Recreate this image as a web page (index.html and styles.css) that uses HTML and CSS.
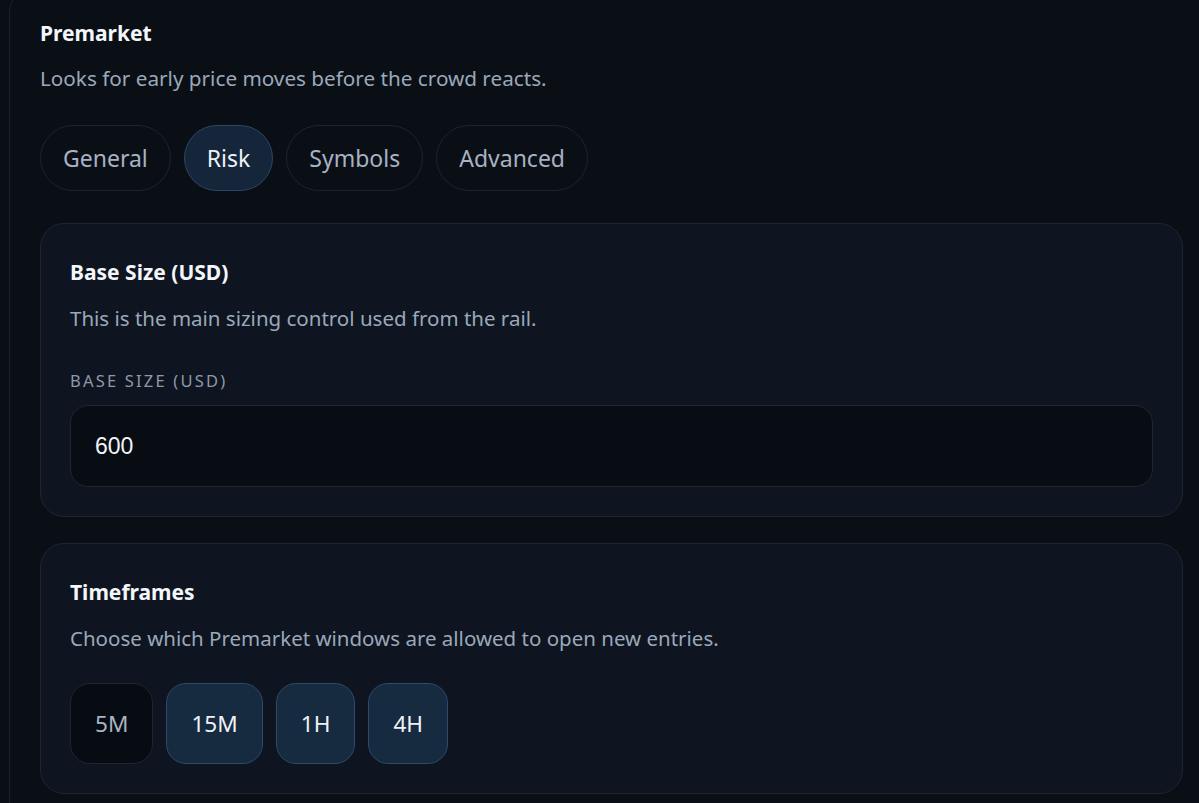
FILE: index.html
```html
<!DOCTYPE html>
<html lang="en">
<head>
<meta charset="utf-8">
<title>Premarket</title>
<link rel="stylesheet" href="styles.css">
</head>
<body>
<div class="panel">
  <h1 class="panel-title">Premarket</h1>
  <p class="panel-desc">Looks for early price moves before the crowd reacts.</p>
  <div class="tabs">
    <button class="tab">General</button>
    <button class="tab active">Risk</button>
    <button class="tab">Symbols</button>
    <button class="tab">Advanced</button>
  </div>
  <section class="card">
    <h2 class="card-title">Base Size (USD)</h2>
    <p class="card-desc">This is the main sizing control used from the rail.</p>
    <label class="field-label">BASE SIZE (USD)</label>
    <div class="input">600</div>
  </section>
  <section class="card">
    <h2 class="card-title">Timeframes</h2>
    <p class="card-desc">Choose which Premarket windows are allowed to open new entries.</p>
    <div class="chips">
      <button class="chip">5M</button>
      <button class="chip on">15M</button>
      <button class="chip on">1H</button>
      <button class="chip on">4H</button>
    </div>
  </section>
</div>
</body>
</html>
```

FILE: styles.css
```css
html, body {
  margin: 0;
  padding: 0;
  background: #0a0f16;
  overflow: hidden;
  height: 803px;
}
body {
  font-family: "Noto Sans", "Open Sans", sans-serif;
  color: #e8edf4;
}
.panel {
  margin: -12px 0 0 9px;
  width: 1143px;
  padding: 30px 30px 40px 30px;
  border: 1px solid #1a212c;
  border-radius: 24px;
  background: #0a0f16;
}
.panel-title {
  margin: 0;
  font-size: 21px;
  line-height: 28px;
  font-weight: 700;
  color: #f3f6fa;
}
.panel-desc {
  margin: 17px 0 0 0;
  font-size: 20.7px;
  line-height: 28px;
  color: #9ba8ba;
}
.tabs {
  display: flex;
  gap: 13px;
  margin-top: 33px;
}
.tab {
  height: 66px;
  padding: 0 22px;
  border-radius: 33px;
  border: 1px solid #1c2430;
  background: #0a0f16;
  color: #a7b2c2;
  font-family: inherit;
  font-size: 23px;
}
.tab.active {
  background: #15263a;
  border-color: #2b4666;
  color: #eef2f7;
}
.card {
  margin-top: 32px;
  padding: 34px 29px 29px 29px;
  border: 1px solid #1d2532;
  border-radius: 24px;
  background: #0e1520;
}
.card + .card {
  margin-top: 26px;
}
.card-title {
  margin: 0;
  font-size: 21px;
  line-height: 28px;
  font-weight: 700;
  color: #f3f6fa;
}
.card-desc {
  margin: 18px 0 0 0;
  font-size: 20.5px;
  line-height: 28px;
  color: #9ba8ba;
}
.field-label {
  display: block;
  margin-top: 39px;
  font-size: 16.5px;
  line-height: 20px;
  letter-spacing: 2.2px;
  color: #8d99aa;
}
.input {
  margin-top: 14px;
  height: 80px;
  display: flex;
  align-items: center;
  padding: 0 24px;
  border: 1px solid #1e2734;
  border-radius: 18px;
  background: #080c13;
  font-family: "Liberation Sans", Arial, sans-serif;
  font-size: 23px;
  color: #f1f4f8;
}
.chips {
  display: flex;
  gap: 13px;
  margin-top: 31px;
}
.chip {
  height: 81px;
  padding: 0 24px;
  border-radius: 20px;
  border: 1px solid #1d2532;
  background: #070b12;
  color: #a9b4c3;
  font-family: inherit;
  font-size: 22.6px;
}
.chip.on {
  background: #162a40;
  border-color: #2c4a6a;
  color: #eef2f7;
}
```
